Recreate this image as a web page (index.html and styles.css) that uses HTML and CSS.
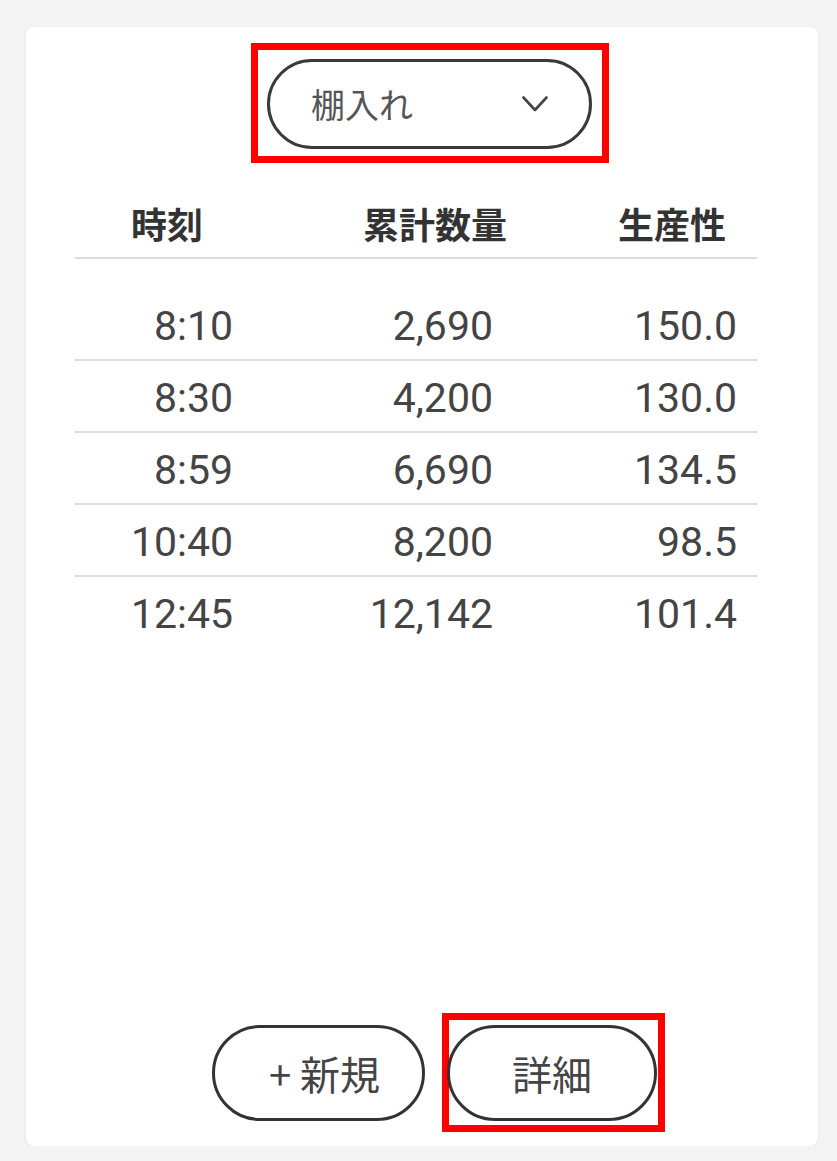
FILE: index.html
```html
<!DOCTYPE html>
<html lang="ja">
<head>
<meta charset="utf-8">
<title>棚入れ</title>
<link rel="stylesheet" href="styles.css">
</head>
<body>
<div class="card">
  <div class="top">
    <div class="mark mark-select">
      <div class="select">
        <span class="select-label">棚入れ</span>
        <svg class="chevron" width="26" height="16" viewBox="0 0 26 16"><path d="M1.5 1.5 L13 14 L24.5 1.5" fill="none" stroke="#444" stroke-width="2.6" stroke-linecap="round" stroke-linejoin="round"/></svg>
      </div>
    </div>
  </div>
  <div class="table">
    <div class="thead">
      <div class="th th1">時刻</div>
      <div class="th th2">累計数量</div>
      <div class="th th3">生産性</div>
    </div>
    <div class="tbody">
      <div class="tr"><div class="td td1">8:10</div><div class="td td2">2,690</div><div class="td td3">150.0</div></div>
      <div class="tr"><div class="td td1">8:30</div><div class="td td2">4,200</div><div class="td td3">130.0</div></div>
      <div class="tr"><div class="td td1">8:59</div><div class="td td2">6,690</div><div class="td td3">134.5</div></div>
      <div class="tr"><div class="td td1">10:40</div><div class="td td2">8,200</div><div class="td td3">98.5</div></div>
      <div class="tr last"><div class="td td1">12:45</div><div class="td td2">12,142</div><div class="td td3">101.4</div></div>
    </div>
  </div>
  <div class="footer">
    <button class="pill btn-new">+ 新規</button>
    <div class="mark mark-detail">
      <button class="pill btn-detail">詳細</button>
    </div>
  </div>
</div>
</body>
</html>
```

FILE: styles.css
```css
html, body {
  margin: 0;
  padding: 0;
}
body {
  background: #f3f3f3;
  font-family: "Noto Sans CJK JP", "Noto Sans", sans-serif;
  color: #333;
}
.card {
  box-sizing: border-box;
  margin: 27px 19px 0 26px;
  height: 1119px;
  background: #fff;
  border-radius: 8px;
  box-shadow: 0 1px 3px rgba(0,0,0,0.08);
  padding: 16px 61px 14px 49px;
  display: flex;
  flex-direction: column;
}
.top {
  display: flex;
  padding-left: 176px;
}
.mark {
  border: 7px solid #ff0000;
  box-sizing: border-box;
}
.mark-select {
  padding: 9px 10px 7px 9px;
}
.select {
  box-sizing: border-box;
  width: 325px;
  height: 90px;
  border: 3px solid #3a3a3a;
  border-radius: 45px;
  display: flex;
  align-items: center;
  justify-content: space-between;
  padding: 0 41px;
}
.select-label {
  font-size: 34px;
  color: #555;
  line-height: 1;
}
.chevron {
  display: block;
}
.table {
  margin-top: 27px;
}
.thead, .tr {
  display: grid;
  grid-template-columns: 185px 255px 242px;
}
.thead {
  height: 67px;
  border-bottom: 2px solid #dcdcdc;
}
.th {
  font-size: 36px;
  font-weight: 700;
  line-height: 67px;
  color: #333;
}
.th1 { padding-left: 56px; text-align: left; }
.th2 { padding-right: 8px; text-align: right; }
.th3 { padding-right: 31px; text-align: right; }
.tbody {
  margin-top: 30px;
}
.tr {
  box-sizing: border-box;
  height: 72px;
  padding-top: 4px;
  border-bottom: 2px solid #dcdcdc;
}
.tr.last {
  border-bottom: none;
}
.td {
  font-family: Roboto, "Noto Sans", sans-serif;
  font-size: 41px;
  line-height: 66px;
  color: #444;
  text-align: right;
}
.td1 { padding-right: 27px; }
.td2 { padding-right: 22px; }
.td3 { padding-right: 20px; }
.footer {
  margin-top: auto;
  display: flex;
  align-items: center;
  padding-left: 137px;
  gap: 17px;
}
.pill {
  box-sizing: border-box;
  height: 96px;
  border: 3px solid #333;
  border-radius: 48px;
  background: #fff;
  font-family: "Noto Sans CJK JP", "Noto Sans", sans-serif;
  font-size: 40px;
  color: #444;
  padding: 0;
  display: flex;
  align-items: center;
  justify-content: center;
}
.btn-new {
  width: 213px;
  padding-left: 12px;
}
.mark-detail {
  padding: 5px 1px 4px 0;
  display: flex;
}
.btn-detail {
  width: 210px;
  margin-left: -2px;
}
```
